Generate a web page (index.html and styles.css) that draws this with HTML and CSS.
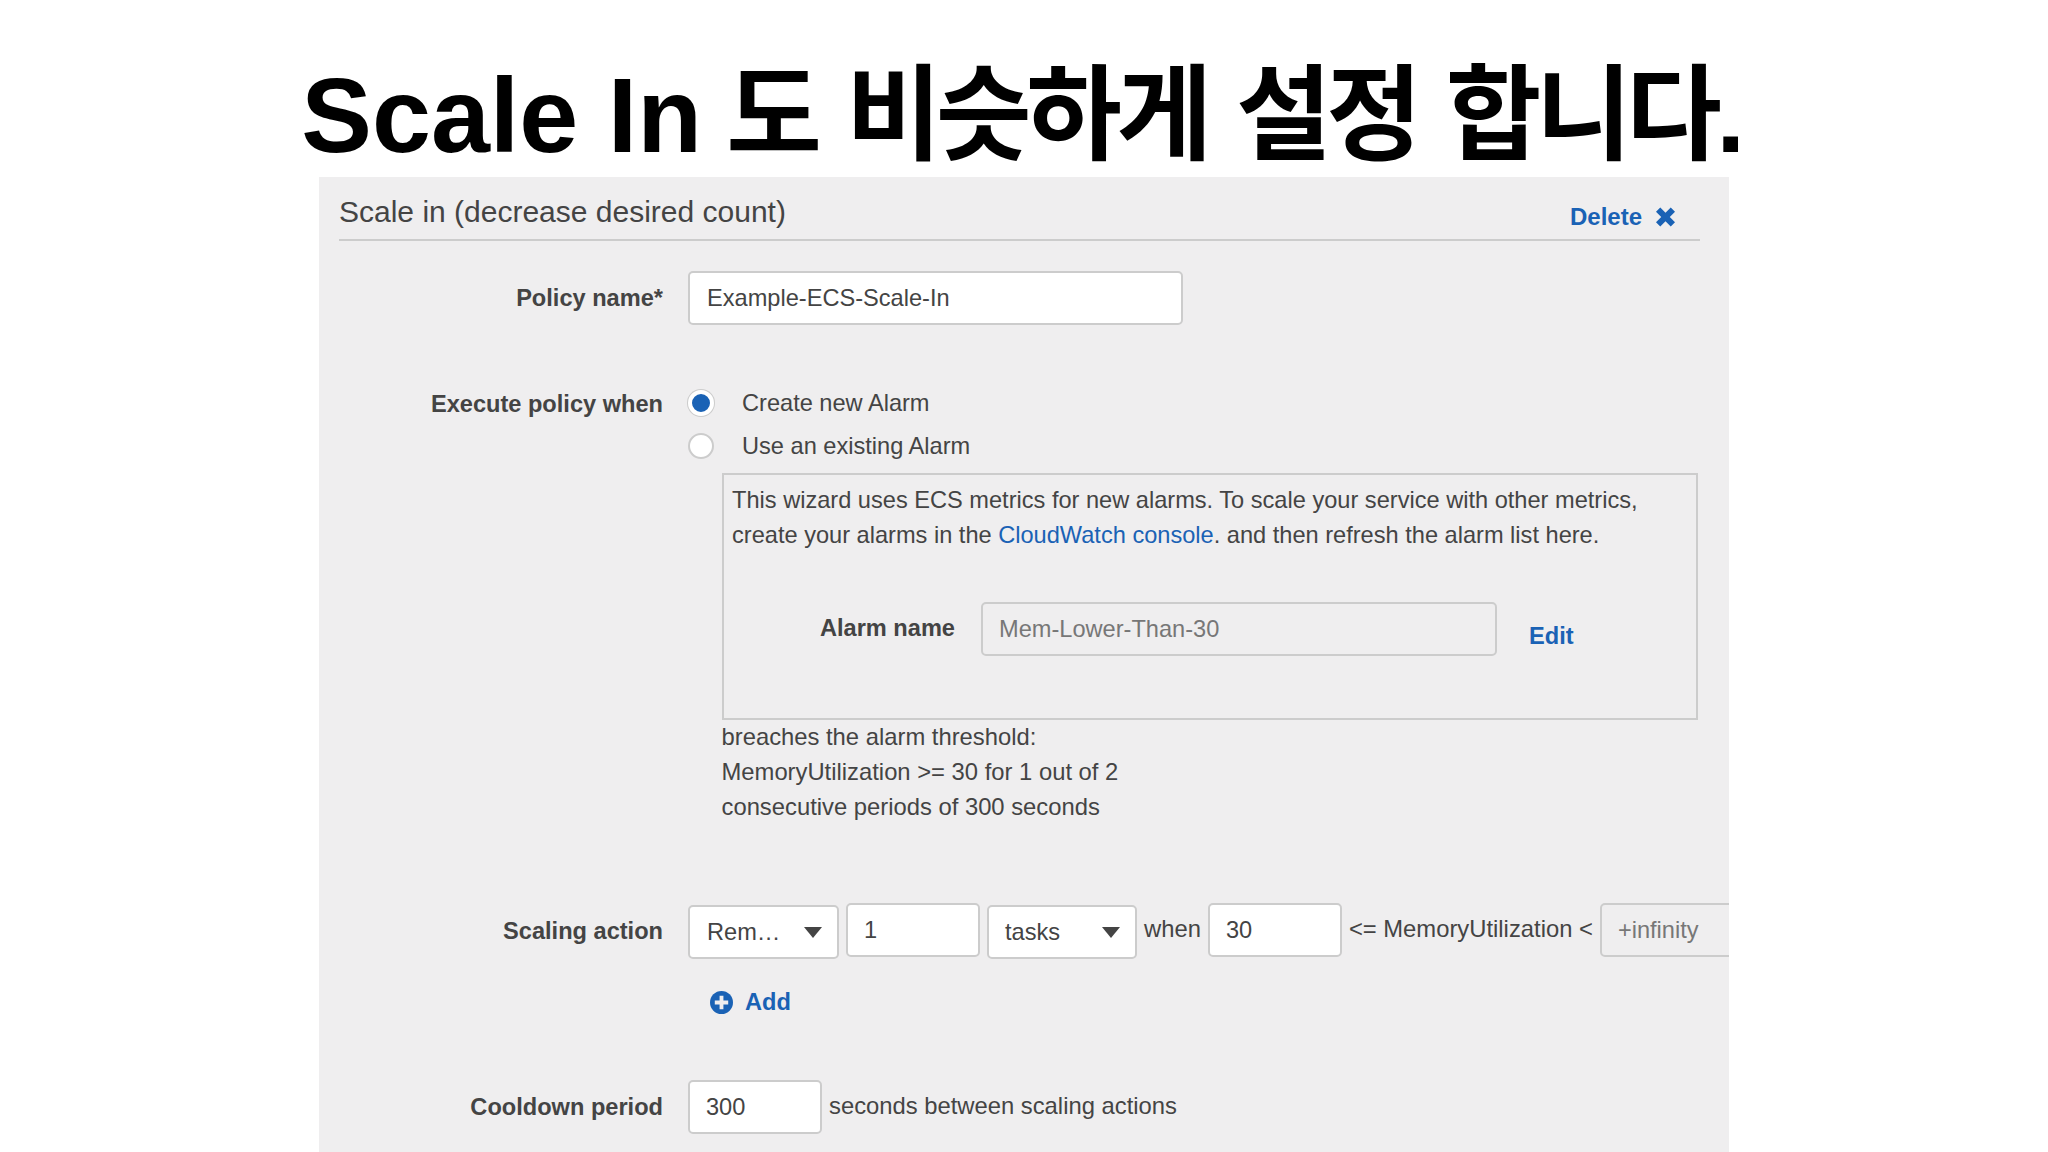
FILE: index.html
```html
<!DOCTYPE html>
<html lang="ko">
<head>
<meta charset="utf-8">
<title>Scale In</title>
<link rel="stylesheet" href="styles.css">
</head>
<body>
<h1 class="title">Scale In <span class="title-ko">도 비슷하게 설정 합니다.</span></h1>
<section class="panel">
  <header class="panel-head">
    <h2 class="panel-title">Scale in (decrease desired count)</h2>
    <a class="link delete">Delete
      <svg class="x-icon" viewBox="0 0 20 20"><path d="M0 4.500 4.500 0 10 5.500 15.500 0 20 4.500 14.500 10 20 15.500 15.500 20 10 14.500 4.500 20 0 15.500 5.500 10Z"/></svg>
    </a>
  </header>

  <div class="row row-policy">
    <div class="label">Policy name*</div>
    <div class="field field-policy">Example-ECS-Scale-In</div>
  </div>

  <div class="row row-exec">
    <div class="label label-exec">Execute policy when</div>
    <div class="exec-body">
      <div class="radio-row"><span class="radio radio-on"></span>Create new Alarm</div>
      <div class="radio-row"><span class="radio"></span>Use an existing Alarm</div>
      <div class="box">
        <p class="box-text">This wizard uses ECS metrics for new alarms. To scale your service with other metrics,<br>create your alarms in the <a class="cw-link">CloudWatch console</a>. and then refresh the alarm list here.</p>
        <div class="alarm-row">
          <div class="alarm-label">Alarm name</div>
          <div class="field field-alarm">Mem-Lower-Than-30</div>
          <a class="link edit">Edit</a>
        </div>
      </div>
      <p class="breach">breaches the alarm threshold:<br>MemoryUtilization &gt;= 30 for 1 out of 2<br>consecutive periods of 300 seconds</p>
    </div>
  </div>

  <div class="row row-scaling">
    <div class="label label-scaling">Scaling action</div>
    <div class="inline">
      <div class="field select select-first"><span>Rem…</span><i class="caret"></i></div>
      <div class="field num">1</div>
      <div class="field select"><span>tasks</span><i class="caret"></i></div>
      <span class="word">when</span>
      <div class="field num">30</div>
      <span class="word">&lt;= MemoryUtilization &lt;</span>
      <div class="field num disabled">+infinity</div>
    </div>
  </div>

  <a class="link add">
    <svg class="plus-icon" viewBox="0 0 24 24"><circle cx="12" cy="12" r="12"/><path class="plus" d="M10 5h4v5h5v4h-5v5h-4v-5H5v-4h5z"/></svg>
    Add
  </a>

  <div class="row row-cool">
    <div class="label">Cooldown period</div>
    <div class="inline">
      <div class="field num">300</div>
      <span class="word">seconds between scaling actions</span>
    </div>
  </div>
</section>
</body>
</html>
```
FILE: styles.css
```css
* { box-sizing: border-box; }
html, body { margin: 0; height: 1152px; overflow: hidden; background: #fff; }
body { font-family: "Liberation Sans", "Noto Sans CJK KR", sans-serif; color: #444; font-size: 23.6px; }

.title {
  margin: 0; height: 177px; padding: 55px 7px 0 0;
  text-align: center; color: #000;
  font-family: "Liberation Sans", "Noto Sans CJK KR", sans-serif;
  font-weight: 700; font-size: 106px; line-height: 120px; white-space: nowrap;
}
.title-ko { font-size: 104px; letter-spacing: -5.5px; word-spacing: 6px; margin-left: -5px; }

.panel {
  margin-left: 319px; width: 1410px; height: 975px;
  background: #efeeef; padding: 0 29px 0 20px; overflow: hidden;
}
.panel-head {
  height: 64px; border-bottom: 2px solid #ccc;
  display: flex; justify-content: space-between; align-items: flex-start;
}
.panel-title { margin: 17px 0 0; font-size: 30px; line-height: 36px; font-weight: 400; }
.link { color: #1a62b5; font-weight: 700; }
.delete { display: flex; align-items: center; gap: 14px; margin: 26px 25px 0 0; line-height: 28px; font-size: 24px; }
.x-icon { width: 19px; height: 20px; fill: #1a62b5; }

.row { display: flex; align-items: flex-start; }
.label { width: 324px; margin-right: 25px; text-align: right; font-weight: 700; flex: none; line-height: 55px; white-space: nowrap; }

.field {
  height: 54px; background: #fff; border: 2px solid #ccc; border-radius: 5px;
  padding: 0 16px; line-height: 51px; white-space: nowrap; flex: none;
}
.row-policy { margin-top: 30px; }
.field-policy { width: 495px; padding-left: 17px; }

.row-exec { margin-top: 55px; }
.label-exec { line-height: 46px; }
.exec-body { flex: none; width: 1010px; }
.radio-row { display: flex; align-items: center; height: 43px; padding-top: 2px; }
.radio {
  width: 26px; height: 26px; border-radius: 50%; background: #fff;
  border: 2px solid #ccc; margin: 0 28px 2px 0; flex: none;
}
.radio-on { border: 4px solid #fff; background: #1a62b5; box-shadow: 0 0 0 1px #ccc; }

.box { margin: 6px 0 0 34px; width: 976px; height: 247px; border: 2px solid #ccc; padding: 8px 8px; }
.box-text { margin: 0; line-height: 35px; white-space: nowrap; }
.cw-link { color: #1a62b5; }
.alarm-row { display: flex; align-items: flex-start; margin-top: 49px; }
.alarm-label { width: 223px; margin-right: 26px; text-align: right; font-weight: 700; line-height: 52px; }
.field-alarm { width: 516px; background: transparent; color: #777; }
.edit { margin: 18px 0 0 32px; line-height: 32px; }

.breach { margin: -1px 0 0 33.5px; line-height: 35px; white-space: nowrap; font-size: 23.8px; }

.row-scaling { margin-top: 79px; }
.label-scaling { line-height: 56px; }
.inline { display: flex; align-items: flex-start; gap: 7px; flex: none; }
.select { width: 150px; margin-top: 2px; display: flex; align-items: center; justify-content: space-between; padding: 0 15px 0 16px; }
.select-first { width: 151px; padding-left: 17px; }
.num { width: 134px; }
.word { line-height: 52px; white-space: nowrap; font-size: 23.8px; }
.disabled { background: transparent; color: #777; width: 160px; }
.caret { width: 0; height: 0; border-left: 9px solid transparent; border-right: 9px solid transparent; border-top: 11px solid #444; }

.add { display: flex; align-items: center; gap: 12px; margin: 28px 0 0 371px; height: 30px; }
.plus-icon { width: 23px; height: 23px; fill: #1a62b5; }
.plus { fill: #efeeef; }

.row-cool { margin-top: 63px; }
```
